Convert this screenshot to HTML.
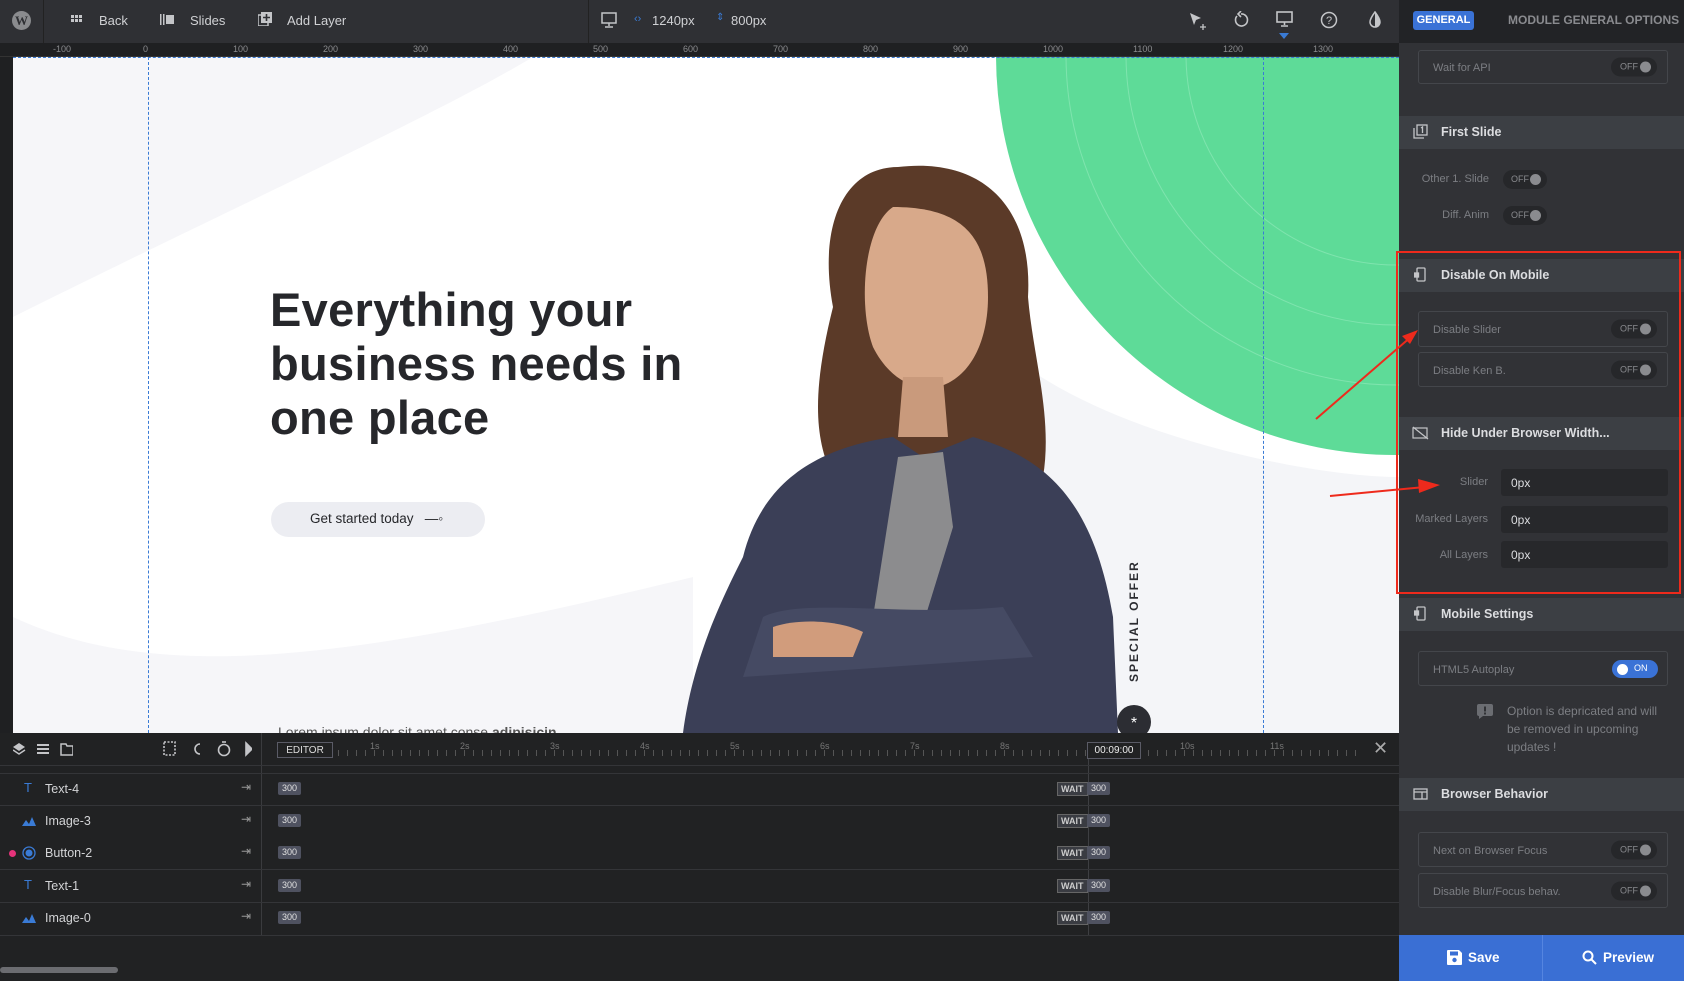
<!DOCTYPE html>
<html><head><meta charset="utf-8"><style>
*{margin:0;padding:0;box-sizing:border-box}
body{width:1684px;height:981px;overflow:hidden;background:#222324;font-family:"Liberation Sans",sans-serif;position:relative}
.a{position:absolute}
.top{left:0;top:0;width:1399px;height:43px;background:#2f3034}
.tt{color:#d0d1d4;font-size:13px;top:13px}
.ruler{left:0;top:43px;width:1399px;height:14px;background:#1f2022;border-bottom:1px solid #333}
.rl{color:#8a8b8e;font-size:9px;top:44px}
.panel{left:1399px;top:0;width:285px;height:981px;background:#313236}
.sh{left:1399px;width:285px;height:33px;background:#3c3f44;color:#dcdde0;font-size:12.5px;font-weight:bold;padding:9px 0 0 42px}
.box{left:1418px;width:250px;border:1px solid #44464b;border-radius:3px;color:#7c7e83;font-size:11px;padding-left:14px}
.tg{position:absolute;right:10px;top:50%;transform:translateY(-50%);width:46px;height:19px;background:#26272a;border-radius:10px;color:#8a8b8f;font-size:9px;padding:4px 0 0 9px}
.tg:after{content:"";position:absolute;right:6px;top:4px;width:11px;height:11px;border-radius:50%;background:#8a8b8f}
.lbl{color:#7c7e83;font-size:11px;text-align:right;width:95px;left:1393px}
.inp{left:1501px;width:167px;height:27px;background:#27282b;border-radius:3px;color:#dcdde0;font-size:12px;padding:7px 0 0 10px}
.row{left:0;width:1399px;height:1px;background:#343538}
.ln{color:#d3d4d6;font-size:12.5px;left:45px}
.b3{background:#4f5260;color:#e0e0e0;font-size:9px;height:13px;padding:1px 4px 0;border-radius:2px}
.wt{border:1px solid #666;background:#3a3c42;color:#ccc;font-size:9px;height:14px;padding:1px 3px;font-weight:bold}
</style></head><body>
<div class="a top"></div>
<div class="a" style="left:43px;top:0;width:1px;height:43px;background:#222"></div>
<div class="a" style="left:588px;top:0;width:1px;height:43px;background:#222"></div>
<svg class="a" style="left:11px;top:10px" width="21" height="21"><circle cx="10.5" cy="10.5" r="9.5" fill="#8a8b8e"/><text x="10.5" y="15" font-size="13" font-weight="bold" text-anchor="middle" fill="#2f3034" font-family="Liberation Serif">W</text></svg>
<svg class="a" style="left:71px;top:15px" width="11" height="10" fill="#c4c5c8"><rect x="0" y="0" width="3" height="3"/><rect x="4" y="0" width="3" height="3"/><rect x="8" y="0" width="3" height="3"/><rect x="0" y="4" width="3" height="3"/><rect x="4" y="4" width="3" height="3"/><rect x="8" y="4" width="3" height="3"/></svg>
<div class="a tt" style="left:99px">Back</div>
<svg class="a" style="left:160px;top:14px" width="14" height="11" fill="#c4c5c8"><rect x="0" y="0" width="1.5" height="11"/><rect x="3" y="0" width="1.5" height="11"/><rect x="6" y="1" width="8" height="9"/></svg>
<div class="a tt" style="left:190px">Slides</div>
<svg class="a" style="left:258px;top:12px" width="14" height="14" fill="#c4c5c8"><rect x="0" y="3" width="10" height="11" fill="none" stroke="#c4c5c8" stroke-width="1.5"/><rect x="3" y="0" width="11" height="11"/><path d="M8.5 2v7M5 5.5h7" stroke="#2f3034" stroke-width="1.6"/></svg>
<div class="a tt" style="left:287px">Add Layer</div>
<svg class="a" style="left:601px;top:12px" width="16" height="16" fill="none" stroke="#c4c5c8" stroke-width="1.5"><rect x="1" y="1" width="14" height="10"/><path d="M8 11v3M4 15h8"/></svg>
<div class="a tt" style="left:634px;color:#3a7bd5;font-size:11px">‹›</div>
<div class="a tt" style="left:652px">1240px</div>
<div class="a tt" style="left:716px;color:#3a7bd5;font-size:10px;top:12px">⇕</div>
<div class="a tt" style="left:731px">800px</div>
<svg class="a" style="left:1188px;top:11px" width="22" height="20"><path d="M2 2l11 5-5 2-2 5z" fill="#c4c5c8"/><path d="M15 13v6M12 16h6" stroke="#c4c5c8" stroke-width="1.3"/></svg>
<svg class="a" style="left:1233px;top:11px" width="16" height="18" fill="none" stroke="#c4c5c8" stroke-width="1.6"><path d="M4 5a6 6 0 1 0 4-2"/><path d="M8 0l-3 3 3 3" /></svg>
<svg class="a" style="left:1276px;top:11px" width="18" height="16" fill="none" stroke="#c4c5c8" stroke-width="1.6"><rect x="1" y="1" width="15" height="10"/><path d="M8.5 11v3M5 15h7"/></svg>
<svg class="a" style="left:1279px;top:33px" width="10" height="6"><path d="M0 0h10l-5 6z" fill="#3a7bd5"/></svg>
<svg class="a" style="left:1320px;top:11px" width="18" height="18" fill="none" stroke="#c4c5c8" stroke-width="1.5"><circle cx="9" cy="9" r="7.5"/><text x="9" y="13" font-size="11" text-anchor="middle" fill="#c4c5c8" stroke="none">?</text></svg>
<svg class="a" style="left:1367px;top:11px" width="16" height="18"><path d="M8 1C5 5 3 8 3 11a5 5 0 0 0 10 0C13 8 11 5 8 1z" fill="none" stroke="#c4c5c8" stroke-width="1.5"/><path d="M8 1C11 5 13 8 13 11a5 5 0 0 1-5 5z" fill="#c4c5c8"/></svg>

<div class="a ruler"></div>
<div class="a rl" style="left:53px">-100</div><div class="a rl" style="left:143px">0</div><div class="a rl" style="left:233px">100</div><div class="a rl" style="left:323px">200</div><div class="a rl" style="left:413px">300</div><div class="a rl" style="left:503px">400</div><div class="a rl" style="left:593px">500</div><div class="a rl" style="left:683px">600</div><div class="a rl" style="left:773px">700</div><div class="a rl" style="left:863px">800</div><div class="a rl" style="left:953px">900</div><div class="a rl" style="left:1043px">1000</div><div class="a rl" style="left:1133px">1100</div><div class="a rl" style="left:1223px">1200</div><div class="a rl" style="left:1313px">1300</div>
<div class="a" style="left:0;top:57px;width:13px;height:676px;background:#1f2022"></div>

<!-- canvas -->
<div class="a" style="left:13px;top:57px;width:1386px;height:676px;background:#fff;overflow:hidden">
<svg width="1386" height="676" style="position:absolute;left:0;top:0">
<path d="M0 0h520C420 60 200 160 0 260z" fill="#f6f6f9"/>
<path d="M0 560C150 630 350 600 680 520L680 676H0z" fill="#f6f6f9"/>
<path d="M1000 300C1100 380 1300 420 1386 420V676H790z" fill="#f4f5f8"/>
<circle cx="1383" cy="-2" r="400" fill="#5edb98"/>
<circle cx="1383" cy="-2" r="330" fill="none" stroke="#7fe4ae" stroke-width="1"/>
<circle cx="1383" cy="-2" r="270" fill="none" stroke="#7fe4ae" stroke-width="1"/>
<circle cx="1383" cy="-2" r="210" fill="none" stroke="#7fe4ae" stroke-width="1"/>
<!-- person -->
<g transform="translate(30,0)">
<path d="M855 110C800 110 775 170 790 250C770 330 770 380 790 420L1000 420C1010 360 990 300 985 240C990 150 940 100 855 110z" fill="#5b3a28"/>
<path d="M850 150C820 170 815 250 830 290C845 320 870 335 895 330C930 320 945 280 945 240C945 180 920 150 850 150z" fill="#d8a98a"/>
<path d="M860 320h40l5 60h-50z" fill="#c99a7c"/>
<path d="M700 500C720 420 780 390 850 380L880 400L930 380C1000 400 1050 440 1070 560L1075 676H640C650 600 680 540 700 500z" fill="#3b3f57"/>
<path d="M855 400L900 395L910 470L870 600L830 560z" fill="#8c8c8e"/>
<path d="M720 560C760 540 860 560 960 550L990 600L700 620z" fill="#454a63"/>
<path d="M730 570C760 560 800 565 820 575L810 600L730 600z" fill="#d19c7c"/>
</g>
<circle cx="1121" cy="665" r="17" fill="#2c2d33"/>
<text x="1121" y="671" font-size="16" text-anchor="middle" fill="#fff">*</text>
</svg>
<div class="a" style="transform:rotate(-90deg);transform-origin:left top;color:#2b2c31;font-size:12px;font-weight:bold;letter-spacing:2px;top:625px;left:1114px">SPECIAL OFFER</div>
<div class="a" style="left:257px;top:226px;color:#26272b;font-size:47px;font-weight:bold;line-height:54px;letter-spacing:0.3px">Everything your<br>business needs in<br>one place</div>
<div class="a" style="left:258px;top:445px;width:214px;height:35px;border-radius:18px;background:#ecedf2;color:#26272b;font-size:13.5px;padding:9px 0 0 39px">Get started today&nbsp;&nbsp;&nbsp;—◦</div>
<div class="a" style="left:135px;top:0;height:676px;border-left:1px dashed #3a7bd5"></div>
<div class="a" style="left:1250px;top:0;height:676px;border-left:1px dashed #3a7bd5"></div>
<div class="a" style="left:0;top:0;width:1386px;border-top:1px dashed #3a7bd5"></div>
<div class="a" style="left:265px;top:667px;color:#555;font-size:14px">Lorem ipsum dolor sit amet conse <b>adipisicin</b></div>
</div>

<!-- timeline -->
<div class="a" style="left:0;top:733px;width:1399px;height:248px;background:#212223"></div>
<div class="a" style="left:261px;top:733px;width:1px;height:202px;background:#3a3b3e"></div>
<svg class="a" style="left:13px;top:742px" width="60" height="14" fill="#c4c5c8"><path d="M6 1l6 4-6 4-6-4z"/><path d="M0 8l6 4 6-4" fill="none" stroke="#c4c5c8" stroke-width="1.5"/><rect x="24" y="2" width="12" height="2"/><rect x="24" y="6" width="12" height="2"/><rect x="24" y="10" width="12" height="2"/><path d="M48 2h5l1 2h6v9H48z" fill="none" stroke="#c4c5c8" stroke-width="1.5"/></svg>
<svg class="a" style="left:162px;top:741px" width="90" height="16" fill="none" stroke="#c4c5c8" stroke-width="1.6"><rect x="2" y="1" width="11" height="13" stroke-dasharray="2 1.5"/><path d="M38 3a5 5 0 1 0 0 10"/><circle cx="62" cy="9" r="5.5"/><path d="M60 1h4"/><path d="M84 2l6 6-6 6z" fill="#c4c5c8"/></svg>
<div class="a" style="left:277px;top:742px;width:56px;height:16px;border:1px solid #5a5b66;color:#ddd;font-size:10px;text-align:center;padding-top:2px">EDITOR</div>
<div class="a" style="left:338px;top:750px;width:1020px;height:6px;background:repeating-linear-gradient(90deg,#555 0 1px,transparent 1px 9px)"></div>
<div class="a" style="left:370px;top:741px;color:#777;font-size:9px">1s</div>
<div class="a" style="left:460px;top:741px;color:#777;font-size:9px">2s</div><div class="a" style="left:550px;top:741px;color:#777;font-size:9px">3s</div><div class="a" style="left:640px;top:741px;color:#777;font-size:9px">4s</div><div class="a" style="left:730px;top:741px;color:#777;font-size:9px">5s</div><div class="a" style="left:820px;top:741px;color:#777;font-size:9px">6s</div><div class="a" style="left:910px;top:741px;color:#777;font-size:9px">7s</div><div class="a" style="left:1000px;top:741px;color:#777;font-size:9px">8s</div><div class="a" style="left:1180px;top:741px;color:#777;font-size:9px">10s</div><div class="a" style="left:1270px;top:741px;color:#777;font-size:9px">11s</div>
<div class="a" style="left:1087px;top:742px;width:54px;height:17px;border:1px solid #5a5b66;background:#212223;color:#eee;font-size:10px;text-align:center;padding-top:2px">00:09:00</div>
<div class="a" style="left:1088px;top:759px;width:1px;height:176px;background:#3e3f42"></div>
<div class="a" style="left:1373px;top:738px;color:#aaa;font-size:18px">✕</div>
<div class="a row" style="top:765px"></div><div class="a row" style="top:773px"></div><div class="a row" style="top:805px"></div><div class="a row" style="top:869px"></div><div class="a row" style="top:902px"></div><div class="a row" style="top:935px"></div>

<div class="a ln" style="top:782px">Text-4</div><div class="a" style="left:24px;top:780px;color:#3a7bd5;font-size:13px">T</div>
<div class="a ln" style="top:814px">Image-3</div><svg class="a" style="left:22px;top:817px" width="14" height="9"><path d="M0 9l4-6 3 4 3-7 4 9z" fill="#3a7bd5"/></svg>
<div class="a ln" style="top:846px">Button-2</div><div class="a" style="left:9px;top:850px;width:7px;height:7px;border-radius:50%;background:#e6337a"></div><svg class="a" style="left:22px;top:846px" width="14" height="14"><circle cx="7" cy="7" r="6" fill="none" stroke="#3a7bd5" stroke-width="1.3"/><circle cx="7" cy="7" r="3.5" fill="#3a7bd5"/></svg>
<div class="a ln" style="top:879px">Text-1</div><div class="a" style="left:24px;top:877px;color:#3a7bd5;font-size:13px">T</div>
<div class="a ln" style="top:911px">Image-0</div><svg class="a" style="left:22px;top:914px" width="14" height="9"><path d="M0 9l4-6 3 4 3-7 4 9z" fill="#3a7bd5"/></svg>
<div class="a" style="left:241px;top:780px;color:#999;font-size:12px">⇥</div><div class="a" style="left:241px;top:812px;color:#999;font-size:12px">⇥</div><div class="a" style="left:241px;top:844px;color:#999;font-size:12px">⇥</div><div class="a" style="left:241px;top:877px;color:#999;font-size:12px">⇥</div><div class="a" style="left:241px;top:909px;color:#999;font-size:12px">⇥</div>

<div class="a b3" style="left:278px;top:782px">300</div><div class="a b3" style="left:278px;top:814px">300</div><div class="a b3" style="left:278px;top:846px">300</div><div class="a b3" style="left:278px;top:879px">300</div><div class="a b3" style="left:278px;top:911px">300</div>
<div class="a wt" style="left:1057px;top:782px">WAIT</div><div class="a b3" style="left:1087px;top:782px">300</div>
<div class="a wt" style="left:1057px;top:814px">WAIT</div><div class="a b3" style="left:1087px;top:814px">300</div>
<div class="a wt" style="left:1057px;top:846px">WAIT</div><div class="a b3" style="left:1087px;top:846px">300</div>
<div class="a wt" style="left:1057px;top:879px">WAIT</div><div class="a b3" style="left:1087px;top:879px">300</div>
<div class="a wt" style="left:1057px;top:911px">WAIT</div><div class="a b3" style="left:1087px;top:911px">300</div>
<div class="a" style="left:0;top:967px;width:118px;height:6px;border-radius:3px;background:#6b6c70"></div>

<!-- right panel -->
<div class="a panel"></div>
<div class="a" style="left:1399px;top:0;width:285px;height:43px;background:#222326"></div>
<div class="a" style="left:1413px;top:11px;width:61px;height:19px;background:#3a72d6;border-radius:3px;color:#fff;font-size:11px;font-weight:bold;text-align:center;padding-top:3px">GENERAL</div>
<div class="a" style="left:1508px;top:13px;color:#8a8b8f;font-size:12px;font-weight:bold">MODULE GENERAL OPTIONS</div>

<div class="a box" style="top:50px;height:34px;padding-top:11px">Wait for API<div class="tg">OFF</div></div>

<div class="a sh" style="top:116px">First Slide</div>
<svg class="a" style="left:1413px;top:124px" width="15" height="15" fill="none" stroke="#c4c5c8" stroke-width="1.3"><rect x="4" y="1" width="10" height="10"/><path d="M1 4v10h10"/><path d="M8 4l1.5-1v6"/></svg>
<div class="a lbl" style="top:173px;left:1393px;width:96px">Other 1. Slide</div><div class="a" style="left:1503px;top:170px;width:44px;height:19px;background:#26272a;border-radius:10px;color:#8a8b8f;font-size:9px;padding:4px 0 0 8px">OFF<span style="position:absolute;right:6px;top:4px;width:11px;height:11px;border-radius:50%;background:#8a8b8f"></span></div>
<div class="a lbl" style="top:209px;left:1393px;width:96px">Diff. Anim</div><div class="a" style="left:1503px;top:206px;width:44px;height:19px;background:#26272a;border-radius:10px;color:#8a8b8f;font-size:9px;padding:4px 0 0 8px">OFF<span style="position:absolute;right:6px;top:4px;width:11px;height:11px;border-radius:50%;background:#8a8b8f"></span></div>

<div class="a sh" style="top:259px">Disable On Mobile</div>
<svg class="a" style="left:1414px;top:267px" width="12" height="15" fill="none" stroke="#c4c5c8" stroke-width="1.3"><rect x="3" y="1" width="8" height="13" rx="1"/><rect x="0.5" y="6" width="4" height="4" fill="#c4c5c8"/></svg>
<div class="a box" style="top:311px;height:36px;padding-top:12px">Disable Slider<div class="tg">OFF</div></div>
<div class="a box" style="top:352px;height:35px;padding-top:12px">Disable Ken B.<div class="tg">OFF</div></div>

<div class="a sh" style="top:417px">Hide Under Browser Width...</div>
<svg class="a" style="left:1412px;top:426px" width="17" height="14" fill="none" stroke="#c4c5c8" stroke-width="1.2"><rect x="1" y="2" width="14" height="10"/><path d="M1 1l15 12"/></svg>
<div class="a lbl" style="top:476px">Slider</div><div class="a inp" style="top:469px">0px</div>
<div class="a lbl" style="top:513px">Marked Layers</div><div class="a inp" style="top:506px">0px</div>
<div class="a lbl" style="top:549px">All Layers</div><div class="a inp" style="top:541px">0px</div>

<div class="a sh" style="top:598px">Mobile Settings</div>
<svg class="a" style="left:1414px;top:606px" width="12" height="15" fill="none" stroke="#c4c5c8" stroke-width="1.3"><rect x="3" y="1" width="8" height="13" rx="1"/><rect x="0.5" y="5" width="4" height="4" fill="#c4c5c8"/></svg>
<div class="a box" style="top:651px;height:35px;padding-top:12px">HTML5 Autoplay<div class="a" style="right:9px;top:8px;width:46px;height:18px;background:#3a72d6;border-radius:9px;color:#fff;font-size:9px;padding:3px 0 0 22px"><span style="position:absolute;left:5px;top:4px;width:11px;height:11px;border-radius:50%;background:#fff"></span>ON</div></div>
<svg class="a" style="left:1477px;top:704px" width="16" height="15"><path d="M0 2a2 2 0 0 1 2-2h12a2 2 0 0 1 2 2v8a2 2 0 0 1-2 2H6l-4 3v-3H2a2 2 0 0 1-2-2z" fill="#6b6d72"/><rect x="7" y="2.5" width="2" height="5" fill="#313236"/><rect x="7" y="8.5" width="2" height="2" fill="#313236"/></svg>
<div class="a" style="left:1507px;top:702px;color:#7c7e83;font-size:12px;line-height:18px;width:158px">Option is depricated and will be removed in upcoming updates !</div>

<div class="a sh" style="top:778px">Browser Behavior</div>
<svg class="a" style="left:1413px;top:788px" width="15" height="12" fill="none" stroke="#c4c5c8" stroke-width="1.3"><rect x="1" y="1" width="13" height="10"/><path d="M1 4h13M9 4v7"/></svg>
<div class="a box" style="top:832px;height:35px;padding-top:12px">Next on Browser Focus<div class="tg">OFF</div></div>
<div class="a box" style="top:873px;height:35px;padding-top:12px">Disable Blur/Focus behav.<div class="tg">OFF</div></div>

<div class="a" style="left:1399px;top:935px;width:285px;height:46px;background:#3a6fd4"></div>
<div class="a" style="left:1542px;top:935px;width:1px;height:46px;background:#5585e0"></div>
<svg class="a" style="left:1447px;top:950px" width="15" height="15"><path d="M0 1a1 1 0 0 1 1-1h11l3 3v11a1 1 0 0 1-1 1H1a1 1 0 0 1-1-1z" fill="#fff"/><rect x="3" y="1.5" width="8" height="4" fill="#3a6fd4"/><circle cx="7.5" cy="10" r="2.2" fill="#3a6fd4"/></svg>
<div class="a" style="left:1468px;top:950px;color:#fff;font-size:13.5px;font-weight:bold">Save</div>
<svg class="a" style="left:1582px;top:950px" width="15" height="15" fill="none" stroke="#fff" stroke-width="2"><circle cx="6" cy="6" r="4.5"/><path d="M9.5 9.5L14 14"/></svg>
<div class="a" style="left:1603px;top:950px;color:#fff;font-size:13.5px;font-weight:bold">Preview</div>

<!-- annotations -->
<div class="a" style="left:1396px;top:251px;width:285px;height:343px;border:2px solid #ee2a1c"></div>
<svg class="a" style="left:1300px;top:330px" width="140" height="170"><path d="M16 89L112 6" stroke="#ee2a1c" stroke-width="2"/><path d="M118 0l-16 6 8 8z" fill="#ee2a1c"/><path d="M30 166L125 157" stroke="#ee2a1c" stroke-width="2"/><path d="M140 155l-22-6 1 14z" fill="#ee2a1c"/></svg>
</body></html>
